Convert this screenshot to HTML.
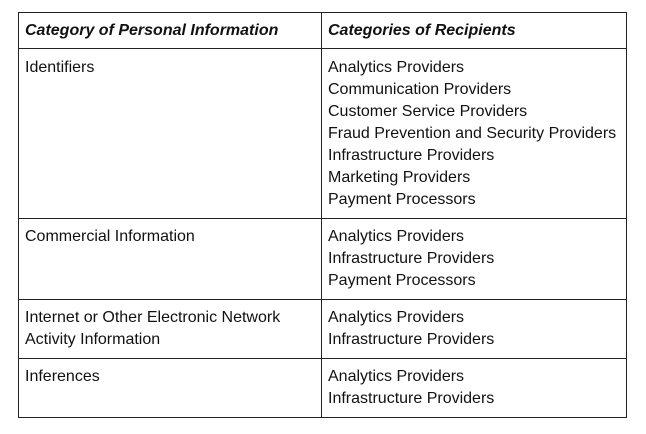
<!DOCTYPE html>
<html><head><style>
body{margin:0;width:646px;height:434px;background:#fff;font-family:"Liberation Sans",Arial,sans-serif;font-size:16px;color:#111;position:relative;overflow:hidden}
.b{position:absolute;background:#222}
.t{position:absolute;line-height:22px;white-space:nowrap}
.h{font-weight:bold;font-style:italic}
</style></head><body>
<div class="b" style="left:18px;top:12px;width:609px;height:1px"></div>
<div class="b" style="left:18px;top:48px;width:609px;height:1px"></div>
<div class="b" style="left:18px;top:218px;width:609px;height:1px"></div>
<div class="b" style="left:18px;top:299px;width:609px;height:1px"></div>
<div class="b" style="left:18px;top:358px;width:609px;height:1px"></div>
<div class="b" style="left:18px;top:417px;width:609px;height:1px"></div>
<div class="b" style="left:18px;top:12px;width:1px;height:406px"></div>
<div class="b" style="left:321px;top:12px;width:1px;height:406px"></div>
<div class="b" style="left:626px;top:12px;width:1px;height:406px"></div>

<div class="t h" style="left:25px;top:20px">Category of Personal Information</div>
<div class="t h" style="left:328px;top:20px">Categories of Recipients</div>

<div class="t" style="left:25px;top:57px">Identifiers</div>
<div class="t" style="left:328px;top:57px">Analytics Providers<br>Communication Providers<br>Customer Service Providers<br>Fraud Prevention and Security Providers<br>Infrastructure Providers<br>Marketing Providers<br>Payment Processors</div>

<div class="t" style="left:25px;top:226px">Commercial Information</div>
<div class="t" style="left:328px;top:226px">Analytics Providers<br>Infrastructure Providers<br>Payment Processors</div>

<div class="t" style="left:25px;top:307px">Internet or Other Electronic Network<br>Activity Information</div>
<div class="t" style="left:328px;top:307px">Analytics Providers<br>Infrastructure Providers</div>

<div class="t" style="left:25px;top:366px">Inferences</div>
<div class="t" style="left:328px;top:366px">Analytics Providers<br>Infrastructure Providers</div>
</body></html>
